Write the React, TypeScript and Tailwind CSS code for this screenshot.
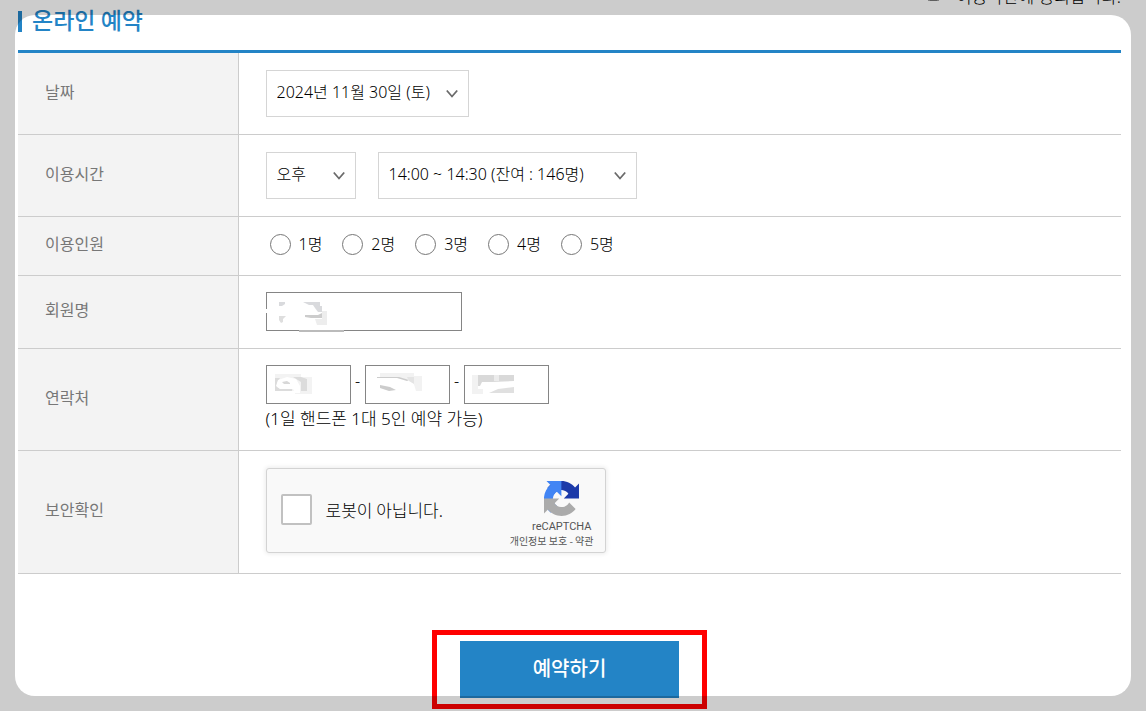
import React, { useState } from 'react';

interface SelectBoxProps {
  id: string;
  label: string;
  options: string[];
  className: string;
}

const SelectBox: React.FC<SelectBoxProps> = ({ id, label, options, className }) => (
  <div className={`relative ${className}`}>
    <select
      id={id}
      aria-label={label}
      className="block w-full h-[47px] appearance-none border border-[#d5d5d5] bg-white pl-[10px] pr-8 pb-1 text-base font-light text-black"
    >
      {options.map((option) => (
        <option key={option}>{option}</option>
      ))}
    </select>
    <svg
      className="pointer-events-none absolute right-[10px] top-[19px] h-[10px] w-[13px]"
      viewBox="0 0 13 10"
      fill="none"
      stroke="#6a6a6a"
      strokeWidth="1.8"
    >
      <path d="M.8 1.5l5.2 6 5.2-6" />
    </svg>
  </div>
);

interface RowProps {
  label: string;
  htmlFor?: string;
  className: string;
  children: React.ReactNode;
}

const Row: React.FC<RowProps> = ({ label, htmlFor, className, children }) => (
  <tr className="border-b border-[#ccc]">
    <th scope="row" className="w-[220px] border-r border-[#ccc] bg-[#f3f3f3] pl-[27px] pb-1 text-left align-middle font-normal text-[#777]">
      <label htmlFor={htmlFor}>{label}</label>
    </th>
    <td className={`pl-[27px] align-middle ${className}`}>{children}</td>
  </tr>
);

const NameSmudge = () => (
  <svg className="pointer-events-none absolute -left-px top-0 h-10 w-[82px]" viewBox="0 0 82 40">
    <path fill="#fff" d="M0 17h3v4H0z" />
    <path fill="#d9dadd" d="M14 10h6v2l-3 2h-3zM38 10h17v4h2v6h-4l-3-4-2-3h-4z" />
    <path fill="#dedede" d="M14 24h7l-3 3v3l-2 1-2-3z" />
    <path fill="#ccc" d="M40 23h13l4-2v5H46l-6-1z" />
    <path fill="#ededed" d="M50 27h7v6h-5zM57 19h5v14h-5z" />
    <path fill="#bbb" d="M34 38h45v2H34z" />
  </svg>
);

const phoneSmudges = [
  <>
    <path fill="#f3f3f3" d="M9 9h26v3h11v17H29v-3H9z" />
    <path fill="#dcdcdc" d="M9 13h5l-3 5v4l4 2h11v2H9zM27 12h8l6 2v12h-6v-9z" />
    <path fill="#fff" d="M12 15l9-3 9 2 4 7v7h-5l-2-4H14l-4-3z" />
    <path fill="#d8d8d8" d="M16 17l5-1 3 2v1h-6z" />
  </>,
  <>
    <path fill="#f2f2f2" d="M15 8h34v3h8v15h-6l-3-10-12-3H15z" />
    <path fill="#ccc" d="M12 12h22l10 3-2 1-10-3H12zM15 20l10 2 6 3-7 1-9-3z" />
    <path fill="#e4e4e4" d="M42 12h7v7l-5-3z" />
  </>,
  <>
    <path fill="#f2f2f2" d="M8 10h6v14h5v5H8z" />
    <path fill="#d9d9d9" d="M14 10h36v6l-22 1H18l-2 4h-2z" />
    <path fill="#e0e0e0" d="M25 28l9-4 16-2v6z" />
    <path fill="#ececec" d="M30 10h5v6h-5z" />
  </>,
];

const RecaptchaLogo = () => (
  <svg className="h-[35px] w-[35px]" viewBox="0 0 64 64">
    <path
      fill="#1C3AA9"
      d="M64 31.955a33 33 0 00-.023-1.216V4.616l-7.222 7.222C50.844 4.603 41.855 0 31.791 0 21.317 0 12.012 4.983 6.179 12.7l11.838 11.963a15.7 15.7 0 014.796-5.388c2.072-1.617 5.008-2.939 8.978-2.939.48 0 .85.056 1.122.161 4.918.388 9.181 3.102 11.691 7.042l-8.38 8.38c10.614-.041 22.604-.066 27.756.036"
    />
    <path
      fill="#4285F4"
      d="M31.862.094c-.407.001-.812.01-1.216.023H4.523l7.222 7.222C4.51 13.25-.093 22.24-.093 32.304c0 10.474 4.983 19.779 12.7 25.611l11.963-11.837a15.7 15.7 0 01-5.388-4.797c-1.617-2.071-2.939-5.008-2.939-8.978 0-.48.056-.85.161-1.122.388-4.918 3.102-9.181 7.042-11.691l8.38 8.38c-.041-10.614-.066-22.604.036-27.756"
    />
    <path
      fill="#ABABAB"
      d="M.001 32.045c0 .407.01.812.023 1.216v26.123l7.222-7.222C13.157 59.397 22.146 64 32.21 64c10.474 0 19.779-4.983 25.612-12.7L45.984 39.337a15.7 15.7 0 01-4.797 5.388c-2.071 1.617-5.007 2.939-8.978 2.939-.48 0-.849-.056-1.121-.161-4.918-.388-9.181-3.102-11.691-7.042l8.38-8.38c-10.614.041-22.604.066-27.756-.036"
    />
  </svg>
);

const Recaptcha = () => (
  <div className="flex h-[85px] w-[340px] items-center justify-between rounded-[3px] border border-[#d3d3d3] bg-[#f9f9f9] pb-[2px] pl-[14px] pr-[11px] shadow-[0_0_4px_1px_rgba(0,0,0,0.08)]">
    <label className="flex items-center gap-[14px] font-['Noto_Sans_CJK_KR',sans-serif] text-[17px] text-black">
      <input type="checkbox" id="robot" className="h-[31px] w-[31px] appearance-none rounded-[2px] border-2 border-[#c1c1c1] bg-white" />
      로봇이 아닙니다.
    </label>
    <div className="flex flex-col items-end pt-[9px] font-normal text-[#555]">
      <div className="mr-[15px]">
        <RecaptchaLogo />
      </div>
      <span className="mr-[2px] mt-1 font-[Roboto,sans-serif] text-[11px] leading-[14px]">reCAPTCHA</span>
      <span className="font-['Noto_Sans_CJK_KR',sans-serif] text-[10px] leading-[14px]">
        <a href="#privacy">개인정보 보호</a> - <a href="#terms">약관</a>
      </span>
    </div>
  </div>
);

export default function App() {
  const [people, setPeople] = useState('');

  return (
    <div className="relative min-h-screen overflow-hidden bg-white pl-[18px] pr-[25px] font-['Noto_Sans','Noto_Sans_CJK_KR',sans-serif] text-base font-light leading-6 text-black">
      <div className="-mt-[15px] flex justify-end">
        <label className="flex h-6 items-center gap-4 text-[17px]">
          <input type="checkbox" className="mb-[6px] h-[13px] w-[13px]" />
          이용약관에 동의합니다.
        </label>
      </div>

      <h2 className="mb-[18px] mt-[2px] flex h-[21px] items-center border-l-4 border-[#2384c6] pb-[6px] pl-[10px] font-['Noto_Sans_CJK_KR',sans-serif] text-[23px] font-medium text-[#2384c6]">
        온라인 예약
      </h2>

      <form onSubmit={(e) => e.preventDefault()}>
        <table className="w-full border-collapse border-t-[3px] border-[#2384c6]">
          <tbody>
            <Row label="날짜" htmlFor="date" className="py-[17px]">
              <SelectBox id="date" label="날짜" options={['2024년 11월 30일 (토)']} className="w-[203px]" />
            </Row>
            <Row label="이용시간" htmlFor="ampm" className="py-[17px]">
              <div className="flex gap-[22px]">
                <SelectBox id="ampm" label="오전/오후" options={['오후', '오전']} className="w-[90px]" />
                <SelectBox id="time" label="시간" options={['14:00 ~ 14:30 (잔여 : 146명)']} className="w-[259px]" />
              </div>
            </Row>
            <Row label="이용인원" className="pb-[19px] pt-[15px]">
              <div className="flex gap-5 pl-1">
                {['1명', '2명', '3명', '4명', '5명'].map((n) => (
                  <label key={n} className="flex items-center gap-2 whitespace-nowrap">
                    <input
                      type="radio"
                      name="people"
                      className="mt-px h-[21px] w-[21px]"
                      checked={people === n}
                      onChange={() => setPeople(n)}
                    />
                    {n}
                  </label>
                ))}
              </div>
            </Row>
            <Row label="회원명" htmlFor="member" className="pb-[17px] pt-4">
              <div className="relative w-[196px]">
                <input id="member" type="text" className="block h-[39px] w-full border border-[#858585] px-2" />
                <NameSmudge />
              </div>
            </Row>
            <Row label="연락처" htmlFor="phone0" className="py-4">
              <div className="flex">
                {phoneSmudges.map((smudge, i) => (
                  <React.Fragment key={i}>
                    {i > 0 && <span className="w-[14px] pt-1 text-center">-</span>}
                    <div className="relative w-[85px]">
                      <input
                        id={`phone${i}`}
                        type="text"
                        aria-label={`연락처 ${i + 1}`}
                        className="block h-[39px] w-full border border-[#858585] px-2"
                      />
                      <svg className="pointer-events-none absolute left-0 top-0 h-[39px] w-[85px]" viewBox="0 0 85 39">
                        {smudge}
                      </svg>
                    </div>
                  </React.Fragment>
                ))}
              </div>
              <p className="pb-[3px] pt-[3px] text-[17px]">(1일 핸드폰 1대 5인 예약 가능)</p>
            </Row>
            <Row label="보안확인" htmlFor="robot" className="pb-5 pt-[17px]">
              <Recaptcha />
            </Row>
          </tbody>
        </table>

        <div className="flex justify-center pt-14">
          <div className="border-[5px] border-[#f00] px-[23px] pb-[6px] pt-[6px]">
            <button
              type="submit"
              className="block h-[57px] w-[219px] bg-[#2384c6] pb-1 font-['Noto_Sans_CJK_KR',sans-serif] text-xl font-medium text-white"
            >
              예약하기
            </button>
          </div>
        </div>
      </form>

      {/* dimmed frame around the form */}
      <div className="pointer-events-none absolute inset-[15px] rounded-[20px] shadow-[0_0_0_40px_rgba(0,0,0,0.2)]" />
    </div>
  );
}
